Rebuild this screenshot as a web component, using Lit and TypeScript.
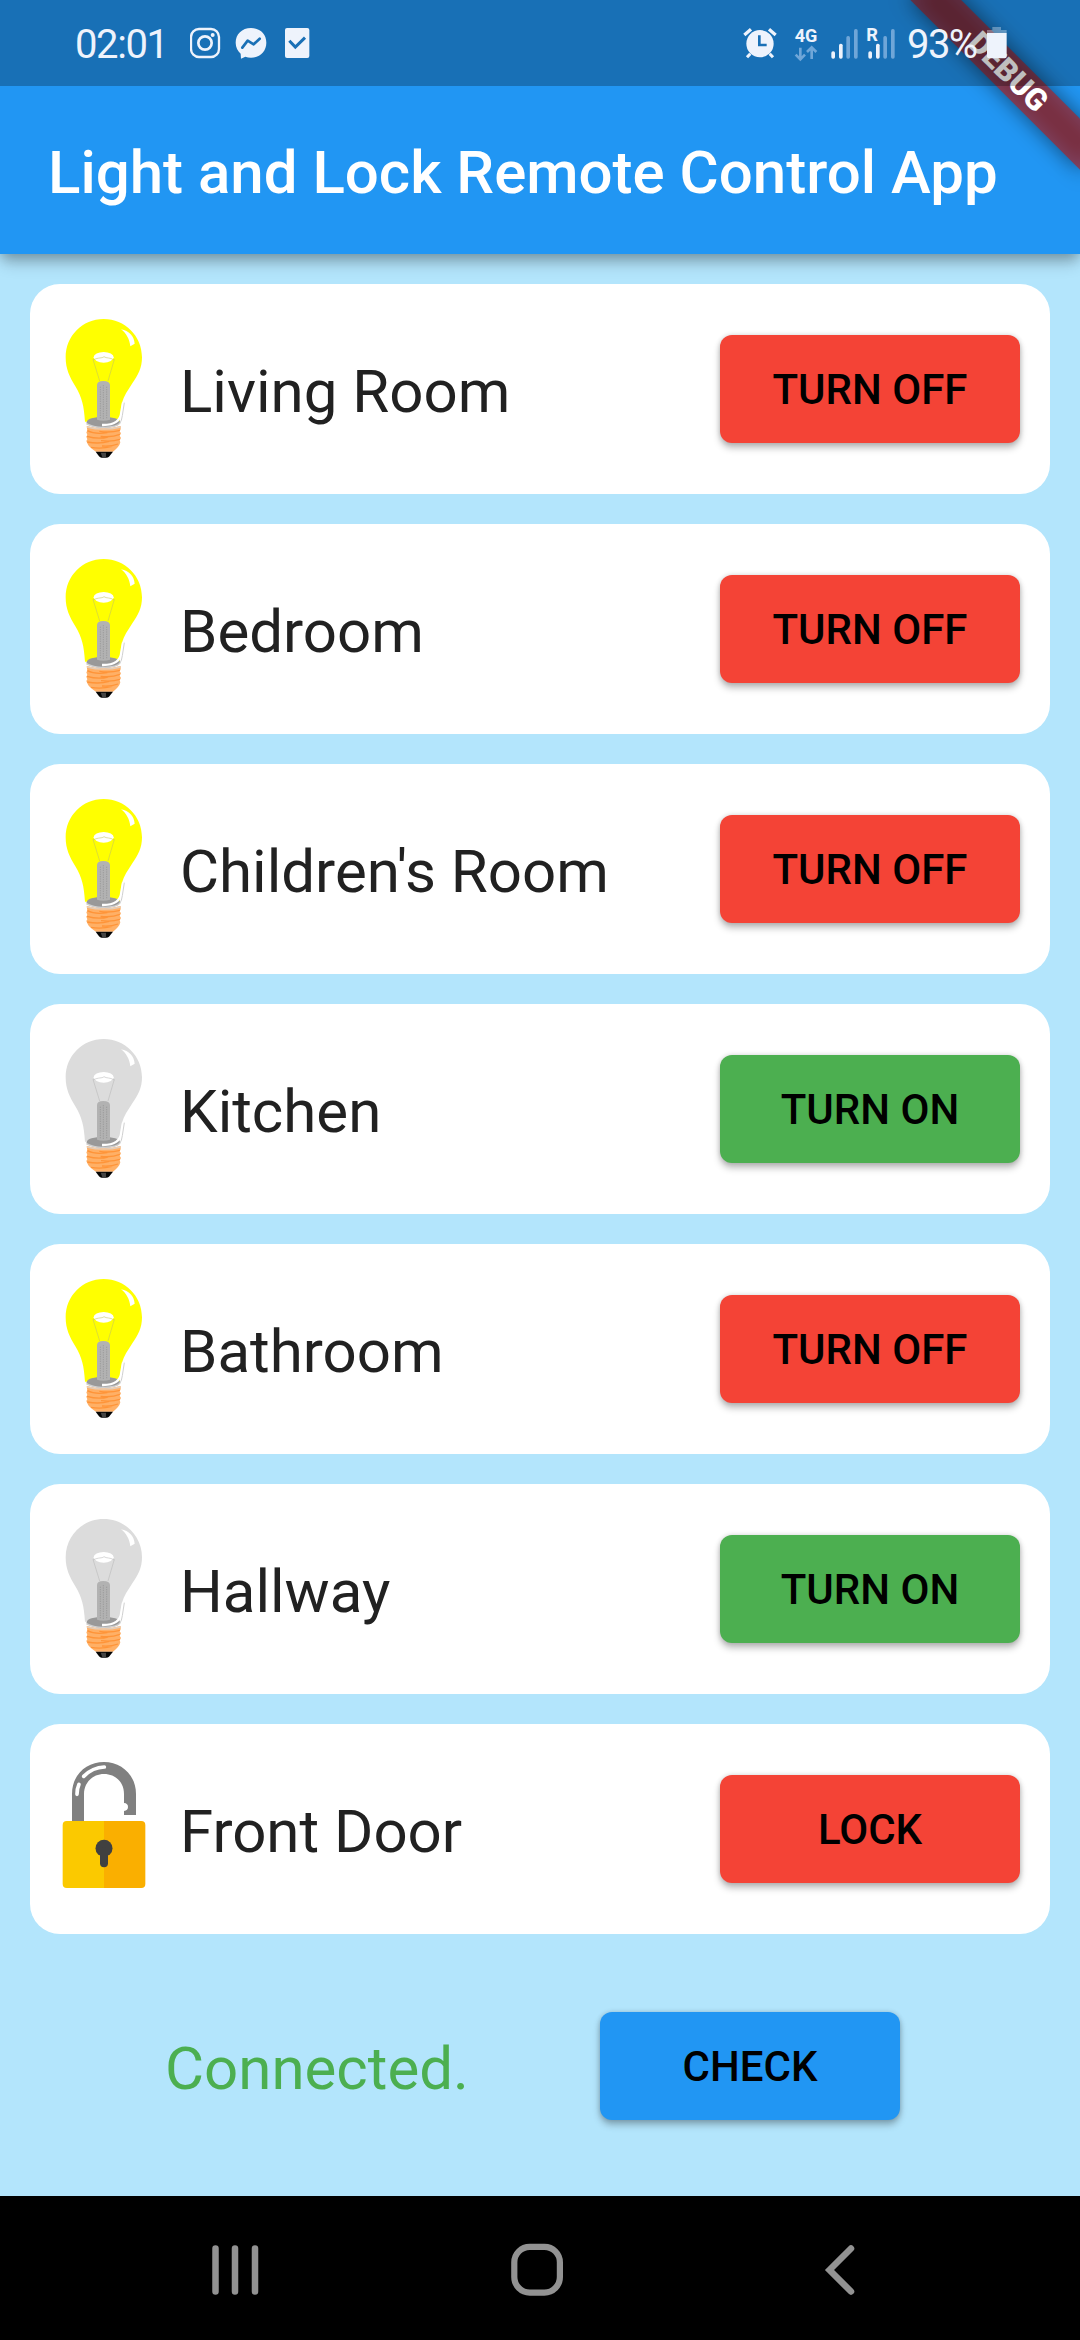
import { LitElement, html, css } from "lit";
import { customElement, property } from "lit/decorators.js";

@customElement("status-bar")
class StatusBar extends LitElement {
  static styles = css`
    :host { display: flex; height: 86px; background: rgba(0, 0, 0, 0.25); color: #eef3fc; box-sizing: border-box; padding: 0 72px 0 75px; justify-content: space-between; }
    .group { display: flex; }
    .time { font-size: 40px; line-height: 90px; letter-spacing: -1.4px; width: 115px; white-space: nowrap; }
    .pct { font-size: 40px; line-height: 90px; letter-spacing: -1.6px; width: 79px; white-space: nowrap; }
    svg { display: block; height: 86px; fill: #eef3fc; }
    .left { width: 130px; }
    .right { width: 165px; }
    .batt { width: 22px; }
    .tag { font-weight: 700; fill: #eef3fc; }
    .dim { fill: #6fa6d8; }
    .line { fill: none; stroke: #eef3fc; }
    .cut { fill: none; stroke: #1a70b6; }
    .dimline { fill: none; stroke: #6fa6d8; }
  `;
  render() {
    return html`
      <div class="group">
        <span class="time">02:01</span>
        <svg class="left" viewBox="570 0 390 258">
          <rect class="line" x="573" y="87" width="84" height="84" rx="24" stroke-width="7" />
          <circle class="line" cx="615" cy="129" r="20" stroke-width="8" />
          <circle cx="638" cy="105" r="6" />
          <path d="M753 84c-27 0-46 19-46 44 0 14 6 25 15 33l1 15 13-6c5 2 11 3 17 3 27 0 46-19 46-45s-19-44-46-44z" />
          <path d="M727 143 743 122 761 133 779 116" class="cut" stroke-width="8" stroke-linecap="round" stroke-linejoin="round" />
          <rect x="855" y="84" width="73" height="90" rx="6" />
          <path d="M868 122 886 141 915 113" class="cut" stroke-width="9" />
        </svg>
      </div>
      <div class="group">
        <svg class="right" viewBox="60 0 495 258">
          <circle cx="114" cy="131" r="41" />
          <path class="line" d="M67 105 87 88M161 105 141 88" stroke-width="10" />
          <path class="line" d="M85 161 75 172M143 161 153 172" stroke-width="9" />
          <path class="cut" d="M112 106V135H134" stroke-width="8" />
          <text class="tag" x="218" y="126" font-size="53" textLength="68" lengthAdjust="spacingAndGlyphs">4G</text>
          <path class="dimline" d="M235 143V178M221 164 235 178 249 164M269 177V142M255 156 269 142 283 156" stroke-width="8" />
          <rect x="328" y="154" width="11" height="22" rx="5" />
          <rect x="351" y="131" width="11" height="45" rx="5" />
          <rect class="dim" x="373" y="108" width="11" height="68" rx="5" />
          <rect class="dim" x="396" y="87" width="11" height="89" rx="5" />
          <text class="tag" x="433" y="122" font-size="53" textLength="35" lengthAdjust="spacingAndGlyphs">R</text>
          <rect x="439" y="154" width="11" height="22" rx="5" />
          <rect x="462" y="131" width="11" height="45" rx="5" />
          <rect class="dim" x="484" y="108" width="11" height="68" rx="5" />
          <rect class="dim" x="507" y="87" width="11" height="89" rx="5" />
        </svg>
        <span class="pct">93%</span>
        <svg class="batt" viewBox="793 0 66 258">
          <path d="M812 81h26v9h17v10H796V90h16z" fill-opacity=".35" />
          <path d="M796 99h59v70q0 6-6 6h-47q-6 0-6-6z" />
        </svg>
      </div>
    `;
  }
}

@customElement("light-bulb")
class LightBulb extends LitElement {
  @property({ type: Boolean }) on = false;
  static styles = css`
    :host { display: block; width: 90px; height: 150px; }
    svg { display: block; width: 90px; height: 150px; }
    .glass-on { fill: #ffff00; }
    .glass-off { fill: #dcdcdc; }
  `;
  render() {
    const wire = this.on ? "#c4c45a" : "#b8b8b8";
    return html`
      <svg viewBox="120 132 270 450">
        <path class=${this.on ? "glass-on" : "glass-off"} d="M251 147C187 147 137 198 137 262C137 297 149 321 166 349C186 383 192 407 195 455H299L306 398C312 377 323 362 337 340C354 315 366 294 366 262C366 198 315 147 251 147Z" />
        <path d="M303 178C327 182 343 200 344 221L331 229C329 208 319 190 303 178Z" fill="#fff" />
        <ellipse cx="251" cy="262" rx="30" ry="16" fill="#fff" />
        <path d="M219 268 239 333M283 268 264 333M219 270C237 261 245 266 252 260C260 266 268 261 283 270" fill="none" stroke=${wire} stroke-width="1.700" />
        <ellipse cx="250" cy="457" rx="50" ry="17" fill="#999" />
        <path d="M231 345Q231 333 250 333T270 345V449Q250 455 231 449Z" fill="#b2b2b2" />
        <path d="M241 350V446M250 345V448M260 350V446" fill="none" stroke="#9c9c9c" stroke-width="3" stroke-dasharray="4 3" />
        <path d="M199 461Q222 473 252 472Q291 472 301 458" fill="none" stroke="#cfcfcf" stroke-width="4" />
        <path d="M246 465C286 466 302 452 304 426L309 398" fill="none" stroke="#fff" stroke-width="7" />
        <path d="M313 398 307 437Q305 452 300 459" fill="none" stroke="#d0d0d0" stroke-width="3" />
        <path d="M200 468Q250 482 302 468V478L299 484 303 490 299 497 303 504 299 511 301 517Q298 531 279 545H228Q207 532 203 522L199 513 202 508 199 500 202 495 199 487 202 482Z" fill="#ffb066" />
        <path d="M202 482Q225 494 262 488M238 484Q270 489 300 481M201 499Q235 509 264 501M242 499Q275 503 300 493M202 516Q238 523 268 514M243 512Q276 516 300 508M213 532Q244 538 276 529M246 528Q273 530 294 522" fill="none" stroke="#ff9438" stroke-width="4" />
        <path d="M201 471Q250 484 302 471" fill="none" stroke="#e2cdbb" stroke-width="4" />
        <path d="M227 545H279L267 560Q264 563 258 563H245Q240 563 237 559Z" fill="#050505" />
        <path d="M242 548H258V562H247Z" fill="#444" />
      </svg>
    `;
  }
}

@customElement("open-padlock")
class OpenPadlock extends LitElement {
  static styles = css`
    :host { display: block; width: 90px; height: 150px; }
    svg { display: block; width: 90px; height: 150px; }
  `;
  render() {
    return html`
      <svg viewBox="120 132 270 450">
        <path d="M156 336V252C156 193 200 156 252 156S348 195 348 252V315H312V303Q324 302 324 291T312 279V252C312 216 286 192 252 192S192 218 192 252V336Z" fill="#808080" />
        <path d="M191 199Q218 172 253 171" fill="none" stroke="#fff" stroke-width="11" stroke-linecap="round" />
        <path d="M177 223Q171 236 171 253" fill="none" stroke="#fff" stroke-width="11" stroke-linecap="round" />
        <path d="M252 333H140Q128 333 128 345V522Q128 534 140 534H252Z" fill="#fbc900" />
        <path d="M252 333H364Q376 333 376 345V522Q376 534 364 534H252Z" fill="#faaf00" />
        <circle cx="252" cy="415" r="25.500" fill="#404040" />
        <path d="M252 425V460" stroke="#404040" stroke-width="24" stroke-linecap="round" />
      </svg>
    `;
  }
}

@customElement("action-button")
class ActionButton extends LitElement {
  @property() label = "";
  @property() tone = "red";
  static styles = css`
    :host { display: block; }
    button {
      display: block; width: 300px; height: 108px; border: 0; border-radius: 12px; padding: 2px 0 0; margin: 0;
      font: 500 42px/106px Roboto, sans-serif; letter-spacing: 0; color: #000;
      box-shadow: 0 5px 7px rgba(0, 0, 0, 0.26), 0 0 5px rgba(0, 0, 0, 0.16);
    }
    .red { background: #f44336; }
    .green { background: #4caf50; }
    .blue { background: #2196f3; }
  `;
  render() {
    return html`<button class=${this.tone}>${this.label}</button>`;
  }
}

interface Device { name: string; kind: "bulb" | "lock"; active: boolean; }

const devices: Device[] = [
  { name: "Living Room", kind: "bulb", active: true },
  { name: "Bedroom", kind: "bulb", active: true },
  { name: "Children's Room", kind: "bulb", active: true },
  { name: "Kitchen", kind: "bulb", active: false },
  { name: "Bathroom", kind: "bulb", active: true },
  { name: "Hallway", kind: "bulb", active: false },
  { name: "Front Door", kind: "lock", active: true },
];

@customElement("app-root")
class AppRoot extends LitElement {
  static styles = css`
    :host { display: flex; flex-direction: column; width: 1080px; height: 2340px; overflow: hidden; background: #b3e5fc; font-family: Roboto, sans-serif; }
    header { position: relative; z-index: 1; height: 254px; background: #2196f3; box-shadow: 0 12px 15px -3px rgba(0, 0, 0, 0.2), 0 3px 12px rgba(0, 0, 0, 0.22); }
    status-bar { position: relative; z-index: 2; }
    h1 { margin: 0; padding-left: 48px; font-size: 60px; font-weight: 500; line-height: 174px; height: 168px; color: #fff; white-space: nowrap; letter-spacing: 0; }
    .corner { position: absolute; inset: 0; overflow: hidden; z-index: 1; }
    .banner { position: absolute; top: 84px; right: -120px; width: 240px; height: 36px; transform-origin: 120px -84px; transform: rotate(45deg); }
    .banner-shadow { position: absolute; inset: 0; background: rgba(0, 0, 0, 0.5); filter: blur(10.9px); }
    .banner-text { position: absolute; inset: 0; background: rgba(183, 28, 28, 0.627); color: #fff; font-size: 30.6px; font-weight: 900; line-height: 36px; text-align: center; }
    main { flex: 1; display: flex; flex-direction: column; gap: 30px; padding: 30px 30px 0; }
    .card { display: flex; align-items: center; gap: 30px; height: 210px; box-sizing: border-box; padding: 0 30px; border-radius: 30px; background: #fff; }
    .name { flex: 1; font-size: 60px; line-height: 70px; padding-top: 6px; color: #212121; white-space: nowrap; }
    .footer { display: flex; align-items: center; height: 108px; padding: 48px 150px 0 135px; justify-content: space-between; }
    .state { font-size: 60px; line-height: 70px; padding-top: 6px; color: #4caf50; }
    nav { height: 144px; background: #000; display: flex; }
    nav svg { width: 1080px; height: 144px; display: block; fill: none; stroke: #929292; stroke-linecap: round; }
  `;
  row(d: Device) {
    const label = d.kind === "lock" ? "LOCK" : d.active ? "TURN OFF" : "TURN ON";
    return html`
      <div class="card">
        ${d.kind === "lock" ? html`<open-padlock></open-padlock>` : html`<light-bulb ?on=${d.active}></light-bulb>`}
        <span class="name">${d.name}</span>
        <action-button label=${label} tone=${d.active ? "red" : "green"}></action-button>
      </div>
    `;
  }
  render() {
    return html`
      <header>
        <status-bar></status-bar>
        <h1>Light and Lock Remote Control App</h1>
        <div class="corner">
          <div class="banner">
            <div class="banner-shadow"></div>
            <div class="banner-text">DEBUG</div>
          </div>
        </div>
      </header>
      <main>
        ${devices.map((d) => this.row(d))}
        <div class="footer">
          <span class="state">Connected.</span>
          <action-button label="CHECK" tone="blue"></action-button>
        </div>
      </main>
      <nav>
        <svg viewBox="0 2196 1080 144">
          <path d="M215.500 2248.500V2291.500M235 2248.500V2291.500M255 2248.500V2291.500" stroke-width="6.500" />
          <rect x="514.300" y="2246.800" width="45.600" height="45.800" rx="15.500" stroke-width="6.200" />
          <path d="M851 2248.500 829.500 2270 851 2291.500" stroke-width="6.500" stroke-linejoin="miter" />
        </svg>
      </nav>
    `;
  }
}
